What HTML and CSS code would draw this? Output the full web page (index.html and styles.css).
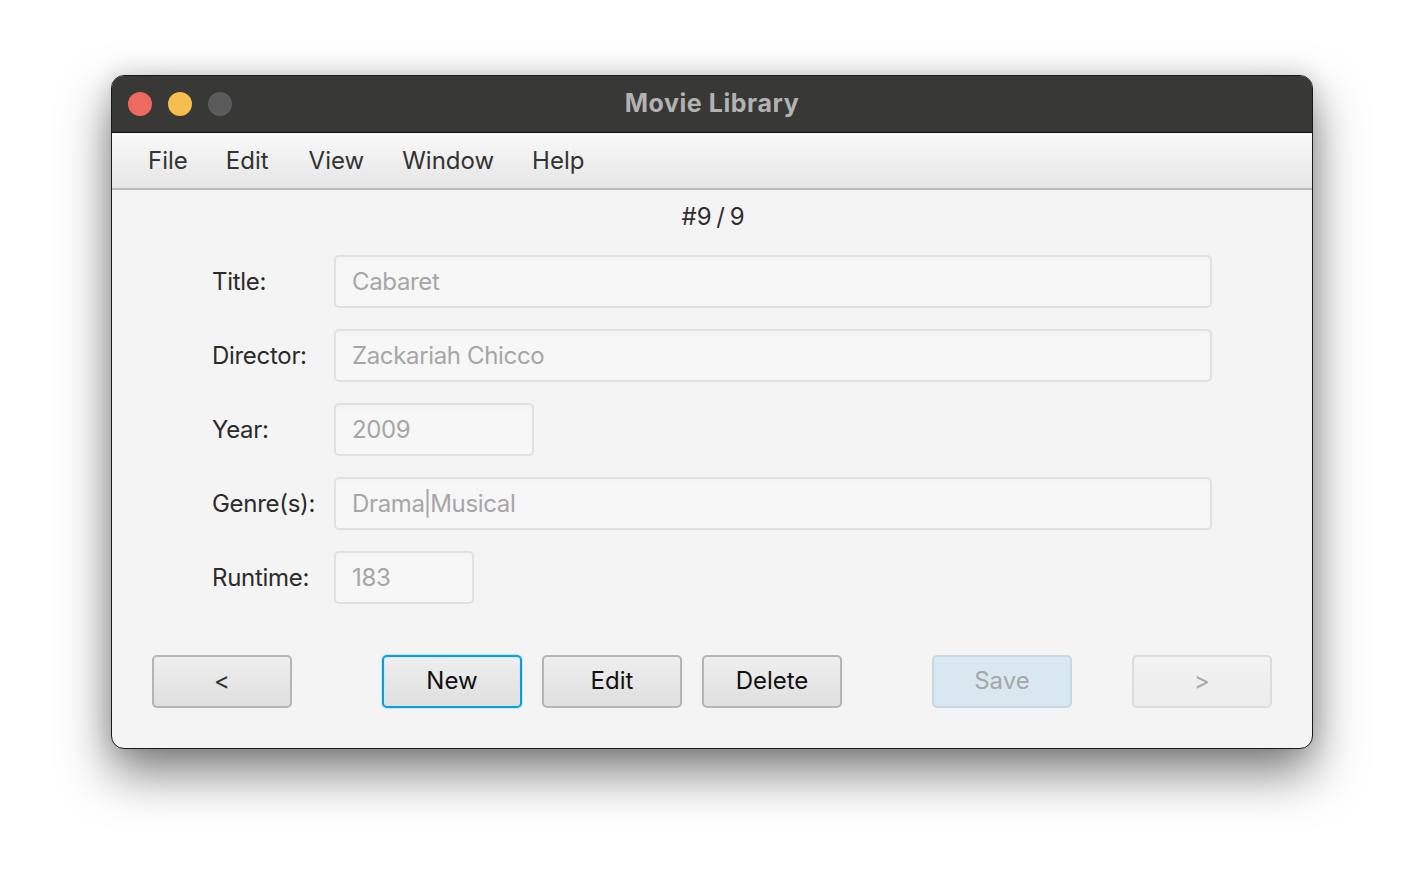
FILE: index.html
```html
<!DOCTYPE html>
<html>
<head>
<meta charset="utf-8">
<link rel="stylesheet" href="styles.css">
</head>
<body>
<div class="window">
  <div class="titlebar">
    <div class="lights">
      <span class="light red"></span>
      <span class="light yellow"></span>
      <span class="light gray"></span>
    </div>
    <div class="title">Movie Library</div>
  </div>
  <div class="menubar">
    <span class="menu">File</span>
    <span class="menu">Edit</span>
    <span class="menu">View</span>
    <span class="menu">Window</span>
    <span class="menu">Help</span>
  </div>
  <div class="content">
    <div class="counter">#9 / 9</div>
    <div class="form">
      <div class="row"><span class="label">Title:</span><div class="field wide">Cabaret</div></div>
      <div class="row"><span class="label">Director:</span><div class="field wide">Zackariah Chicco</div></div>
      <div class="row"><span class="label">Year:</span><div class="field year">2009</div></div>
      <div class="row"><span class="label">Genre(s):</span><div class="field wide">Drama<span class="pipe">|</span>Musical</div></div>
      <div class="row"><span class="label">Runtime:</span><div class="field runtime">183</div></div>
    </div>
    <div class="buttons">
      <button class="btn prev">&lt;</button>
      <button class="btn focus new">New</button>
      <button class="btn edit">Edit</button>
      <button class="btn delete">Delete</button>
      <button class="btn save disabled-blue">Save</button>
      <button class="btn next disabled">&gt;</button>
    </div>
  </div>
</div>
</body>
</html>
```
FILE: styles.css
```css
* { box-sizing: border-box; }
html, body {
  margin: 0;
  padding: 0;
  background: #ffffff;
  font-family: Inter, "Noto Sans", "Liberation Sans", sans-serif;
}
body {
  width: 1424px;
  height: 896px;
  overflow: hidden;
  padding-top: 75px;
}
.window {
  width: 1202px;
  margin: 0 0 0 111px;
  border: 1px solid #1a1a1a;
  border-radius: 13px;
  overflow: hidden;
  background: #f4f4f4;
  box-shadow: 0 24px 50px rgba(0,0,0,0.5), 0 0 24px rgba(0,0,0,0.14);
}
.titlebar {
  height: 57px;
  background: #383836;
  border-bottom: 1px solid #111;
  display: flex;
  align-items: center;
  position: relative;
}
.lights {
  display: flex;
  gap: 16px;
  padding-left: 16px;
  position: relative;
  z-index: 1;
}
.light {
  width: 24px;
  height: 24px;
  border-radius: 50%;
  display: block;
}
.red { background: #ee6a5f; }
.yellow { background: #f5be4f; }
.gray { background: #5b5b5b; }
.title {
  position: absolute;
  left: 0; right: 0; top: 0; bottom: 0;
  display: flex;
  align-items: center;
  justify-content: center;
  color: #b2b2b2;
  font-weight: 700;
  font-size: 25px;
  letter-spacing: 0.55px;
  padding-bottom: 2px;
}
.menubar {
  height: 57px;
  background: linear-gradient(#f9f9f9, #e6e6e6);
  border-bottom: 2px solid #bababa;
  display: flex;
  align-items: center;
  padding-left: 36px;
  color: #333;
  font-size: 24px;
}
.menu:nth-child(1) { margin-right: 38px; }
.menu:nth-child(2) { margin-right: 40px; }
.menu:nth-child(3) { margin-right: 38px; }
.menu:nth-child(4) { margin-right: 38px; }
.content {
  padding: 12px 0 40px;
}
.counter {
  text-align: center;
  font-size: 24px;
  line-height: 30px;
  color: #2f2f2f;
  word-spacing: -2px;
  padding-left: 2px;
}
.form {
  margin-top: 23px;
  padding: 0 100px;
  display: flex;
  flex-direction: column;
  gap: 21px;
}
.row {
  display: flex;
  align-items: center;
  height: 53px;
}
.label {
  width: 122px;
  flex: none;
  font-size: 24px;
  color: #2b2b2b;
  letter-spacing: -0.3px;
}
.field {
  height: 53px;
  border: 2px solid #e0e0e0;
  border-radius: 5px;
  background: linear-gradient(#f3f3f3, #f7f7f7 6px);
  color: #a6a6a6;
  font-size: 24px;
  display: flex;
  align-items: center;
  padding-left: 16px;
  letter-spacing: -0.35px;
}
.pipe { margin: 0 -1px; }
.wide { flex: 1; }
.year { width: 200px; }
.runtime { width: 140px; }
.buttons {
  margin-top: 51px;
  padding: 0 40px;
  display: flex;
}
.btn {
  width: 140px;
  height: 53px;
  border: 2px solid #b5b5b5;
  border-radius: 5px;
  background: linear-gradient(#efefef, #dfdfdf);
  font-family: inherit;
  font-size: 24px;
  color: #111;
  padding: 0 0 2px;
}
.new { margin-left: 90px; border-color: #0b9fd8; box-shadow: 0 0 0 1px #c4e6f5, inset 0 0 0 1px #d2e7f0; }
.edit { margin-left: 20px; }
.delete { margin-left: 20px; }
.save { margin-left: 90px; }
.next { margin-left: 60px; }
.prev { color: #333; }
.disabled-blue {
  background: #d9e8f0;
  border-color: #c8d8e2;
  color: #a7a7a7;
}
.disabled {
  background: linear-gradient(#f2f2f2, #ececec);
  border-color: #dcdcdc;
  color: #a9a9a9;
}
```
